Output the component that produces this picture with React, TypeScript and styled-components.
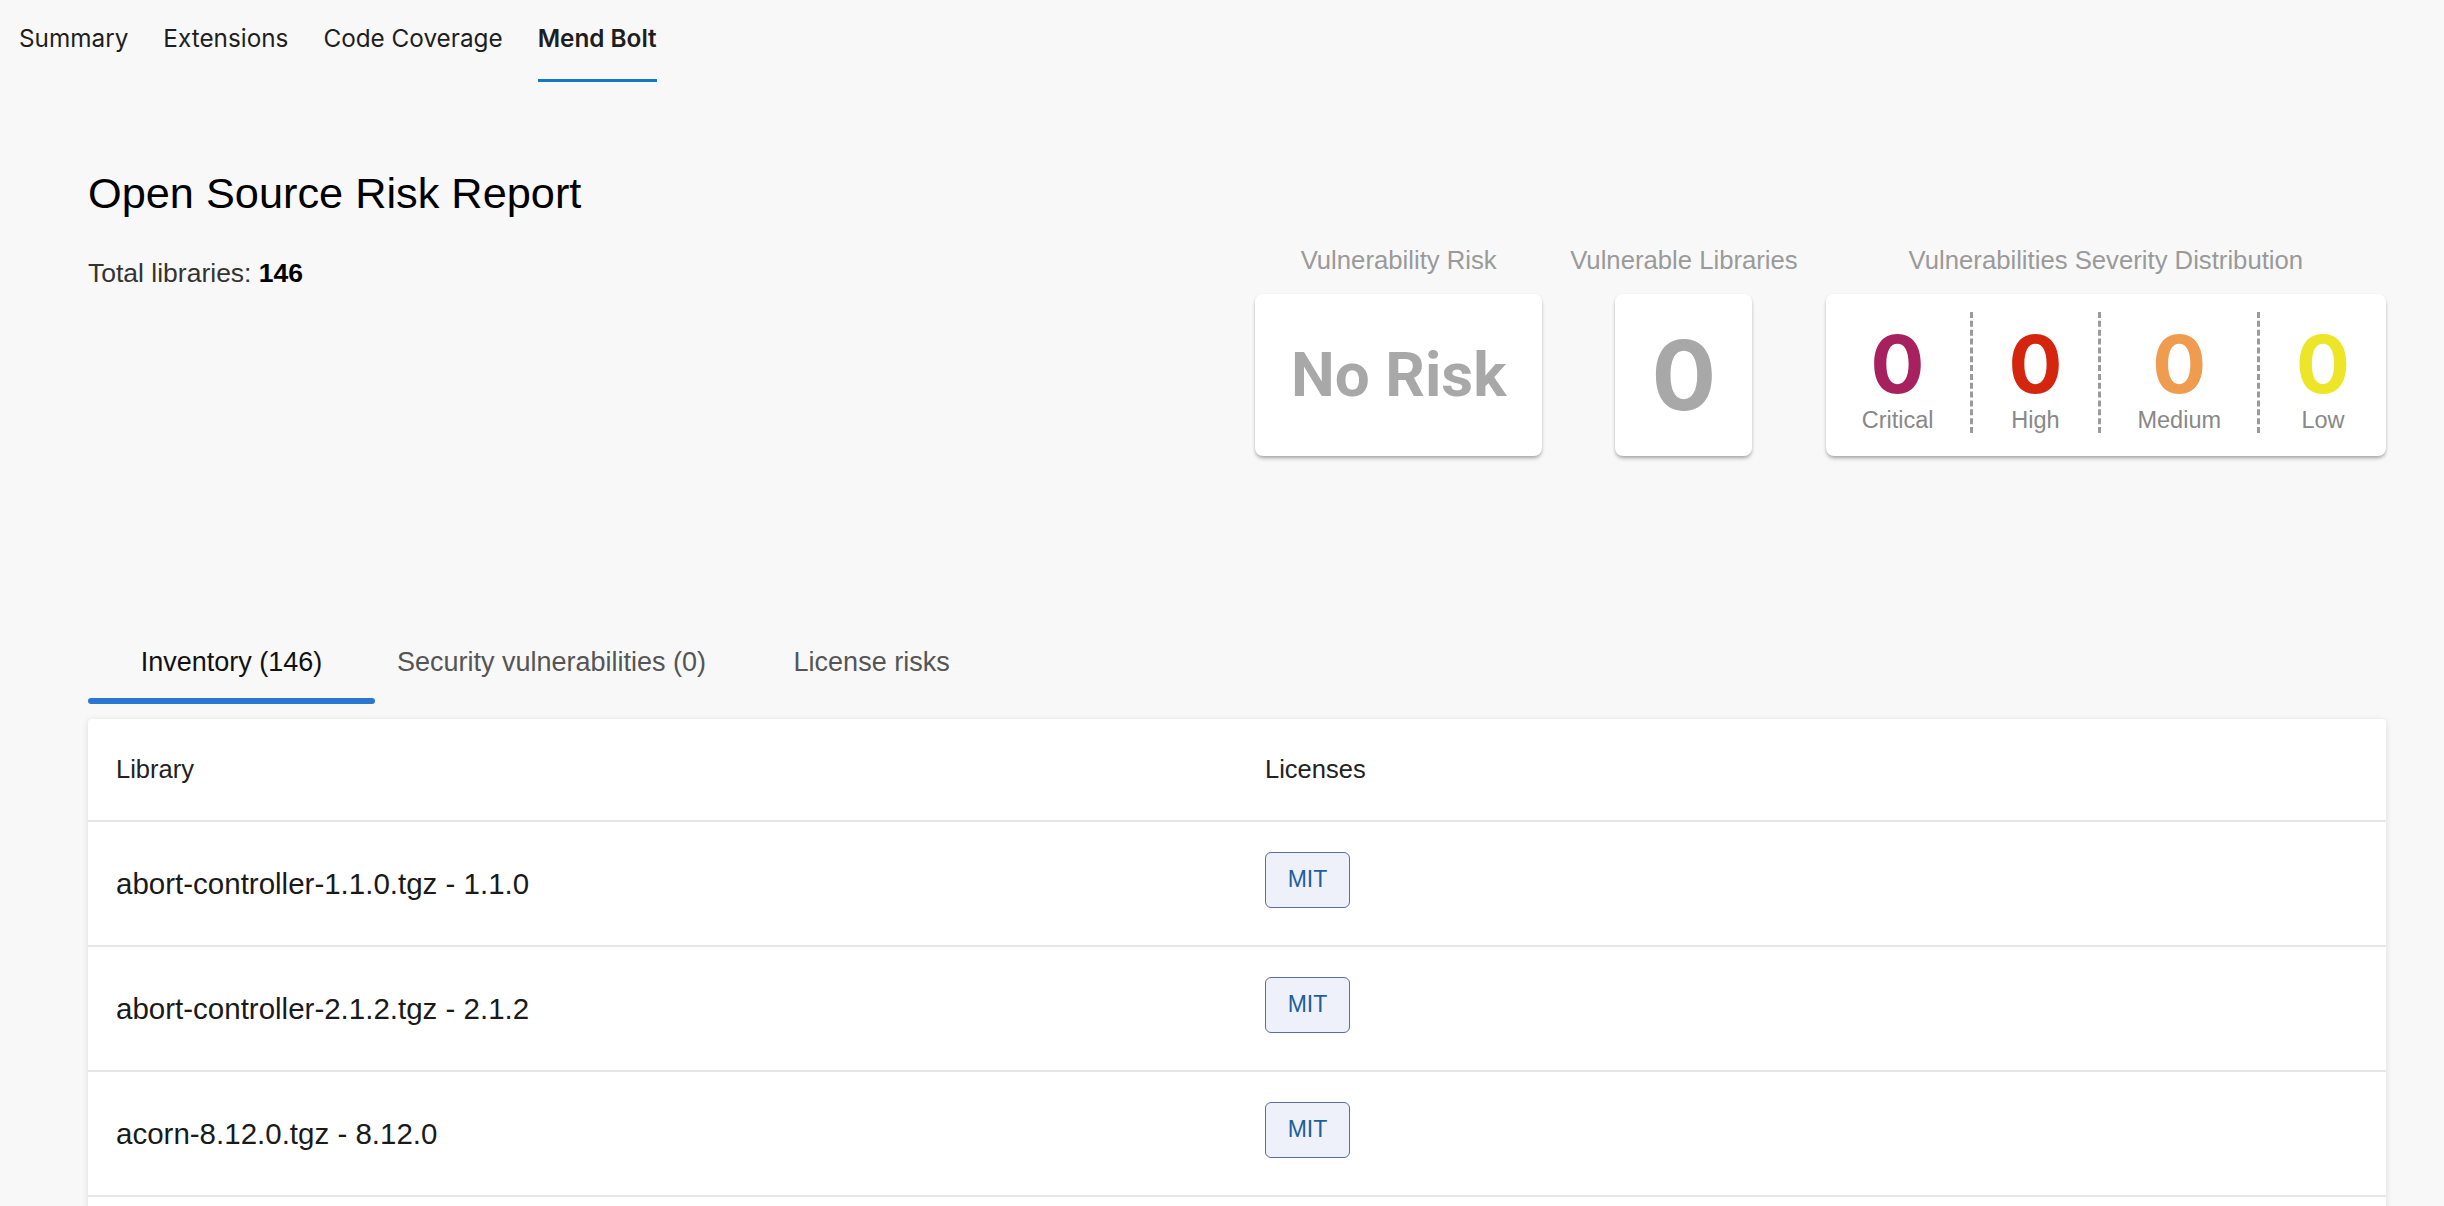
import React from 'react';
import styled, { createGlobalStyle } from 'styled-components';

const GlobalStyle = createGlobalStyle`
  html, body {
    margin: 0;
    padding: 0;
    background: #f8f8f8;
    overflow: hidden;
  }
  body {
    font-family: "Liberation Sans", Arial, sans-serif;
    color: #1a1a1a;
  }
`;

const navItems = ['Summary', 'Extensions', 'Code Coverage', 'Mend Bolt'];

const severities = [
  { label: 'Critical', color: '#a8215f' },
  { label: 'High', color: '#d4260f' },
  { label: 'Medium', color: '#f09c50' },
  { label: 'Low', color: '#ece528' },
];

const libraries = [
  'abort-controller-1.1.0.tgz - 1.1.0',
  'abort-controller-2.1.2.tgz - 2.1.2',
  'acorn-8.12.0.tgz - 8.12.0',
  'acorn-jsx-5.3.2.tgz - 5.3.2',
];

const TopNav = styled.nav`
  display: flex;
  gap: 35px;
  padding-left: 19px;
`;

const NavTab = styled.div<{ $active?: boolean }>`
  box-sizing: border-box;
  height: 82px;
  padding-top: 24px;
  font-family: Inter, "Noto Sans", sans-serif;
  font-size: 24.3px;
  line-height: 29px;
  color: #1e1e1e;
  font-weight: ${(p) => (p.$active ? 600 : 400)};
  border-bottom: 3px solid ${(p) => (p.$active ? '#1479c4' : 'transparent')};
`;

const Content = styled.main`
  padding: 0 58px 0 88px;
`;

const Header = styled.section`
  display: flex;
  justify-content: space-between;
  align-items: flex-start;
  padding-top: 90px;
`;

const TitleBlock = styled.div`
  display: flex;
  flex-direction: column;
`;

const Title = styled.h1`
  margin: 0;
  font-size: 43.3px;
  line-height: 42px;
  font-weight: 400;
  color: #000;
`;

const Total = styled.div`
  margin-top: 47px;
  font-size: 26.5px;
  line-height: 25px;
  color: #333;

  b {
    color: #000;
  }
`;

const Metrics = styled.div`
  display: flex;
  gap: 28px;
  margin-top: 76px;
`;

const MetricGroup = styled.div`
  display: flex;
  flex-direction: column;
  align-items: center;
`;

const MetricLabel = styled.div`
  font-size: 25.7px;
  line-height: 24px;
  color: #9a9a9a;
  white-space: nowrap;
`;

const Card = styled.div<{ $width?: number }>`
  box-sizing: border-box;
  margin-top: 22px;
  height: 162px;
  ${(p) => (p.$width ? `width: ${p.$width}px;` : '')}
  background: #fff;
  border-radius: 8px;
  box-shadow: 0 3px 4px -1px rgba(0, 0, 0, 0.32), 0 1px 3px rgba(0, 0, 0, 0.08);
  display: flex;
  align-items: center;
  justify-content: center;
`;

const RiskValue = styled.div`
  font-family: Roboto, "Liberation Sans", sans-serif;
  font-weight: 700;
  font-size: 62px;
  line-height: 1;
  color: #a8a8a8;
  white-space: nowrap;
`;

const CountValue = styled.div`
  font-family: Inter, Roboto, sans-serif;
  font-weight: 700;
  font-size: 96px;
  line-height: 1;
  color: #a8a8a8;
`;

const SeverityCard = styled(Card)`
  align-items: stretch;
  padding: 18px 0 23px;
`;

const SeverityCell = styled.div<{ $divider?: boolean }>`
  display: flex;
  flex-direction: column;
  align-items: center;
  padding: 12px 36px 0;
  border-left: 3px dashed ${(p) => (p.$divider ? '#9a9a9a' : 'transparent')};
  margin-left: ${(p) => (p.$divider ? 0 : -3)}px;
`;

const SeverityCount = styled.div<{ $color: string }>`
  font-family: Inter, Roboto, sans-serif;
  font-weight: 700;
  font-size: 80px;
  line-height: 80px;
  color: ${(p) => p.$color};
`;

const SeverityLabel = styled.div`
  margin-top: 5px;
  font-size: 23.5px;
  line-height: 22px;
  color: #888;
`;

const TabBar = styled.div`
  display: flex;
  margin-top: 188px;
`;

const Tab = styled.div<{ $active?: boolean }>`
  position: relative;
  box-sizing: border-box;
  min-width: 287px;
  height: 60px;
  padding: 6px 22px 0;
  text-align: center;
  font-size: 27px;
  line-height: 24px;
  color: ${(p) => (p.$active ? '#111' : '#555')};
  white-space: nowrap;

  &::after {
    content: '';
    display: ${(p) => (p.$active ? 'block' : 'none')};
    position: absolute;
    left: 0;
    right: 0;
    bottom: 0;
    height: 6px;
    border-radius: 3px;
    background: #2977d0;
  }
`;

const Table = styled.div`
  margin-top: 15px;
  background: #fff;
  border-radius: 4px 4px 0 0;
  box-shadow: 0 1px 6px rgba(0, 0, 0, 0.12);
`;

const Row = styled.div<{ $head?: boolean }>`
  box-sizing: border-box;
  display: grid;
  grid-template-columns: 1fr 1fr;
  align-items: center;
  height: ${(p) => (p.$head ? 103 : 125)}px;
  border-bottom: 2px solid #e6e6e6;
`;

const HeadCell = styled.div`
  padding: 0 28px;
  font-size: 25.5px;
  color: #222;
`;

const Cell = styled.div`
  padding: 0 28px;
  font-size: 29.5px;
  color: #1a1a1a;
`;

const LicenseBadge = styled.span`
  box-sizing: border-box;
  display: inline-flex;
  align-items: center;
  justify-content: center;
  width: 85px;
  height: 56px;
  margin-top: -8px;
  border: 1.5px solid #5b6ba3;
  border-radius: 6px;
  background: #eef0fa;
  color: #1d5f9e;
  font-size: 23px;
`;

export default function App() {
  return (
    <>
      <GlobalStyle />
      <TopNav>
        {navItems.map((n) => (
          <NavTab key={n} $active={n === 'Mend Bolt'}>
            {n}
          </NavTab>
        ))}
      </TopNav>
      <Content>
        <Header>
          <TitleBlock>
            <Title>Open Source Risk Report</Title>
            <Total>
              Total libraries: <b>146</b>
            </Total>
          </TitleBlock>
          <Metrics>
            <MetricGroup>
              <MetricLabel>Vulnerability Risk</MetricLabel>
              <Card $width={287}>
                <RiskValue>No Risk</RiskValue>
              </Card>
            </MetricGroup>
            <MetricGroup>
              <MetricLabel>Vulnerable Libraries</MetricLabel>
              <Card $width={137}>
                <CountValue>0</CountValue>
              </Card>
            </MetricGroup>
            <MetricGroup>
              <MetricLabel>Vulnerabilities Severity Distribution</MetricLabel>
              <SeverityCard>
                {severities.map((s, i) => (
                  <SeverityCell key={s.label} $divider={i > 0}>
                    <SeverityCount $color={s.color}>0</SeverityCount>
                    <SeverityLabel>{s.label}</SeverityLabel>
                  </SeverityCell>
                ))}
              </SeverityCard>
            </MetricGroup>
          </Metrics>
        </Header>

        <TabBar>
          <Tab $active>Inventory (146)</Tab>
          <Tab>Security vulnerabilities (0)</Tab>
          <Tab>License risks</Tab>
        </TabBar>

        <Table>
          <Row $head>
            <HeadCell>Library</HeadCell>
            <HeadCell>Licenses</HeadCell>
          </Row>
          {libraries.map((lib) => (
            <Row key={lib}>
              <Cell>{lib}</Cell>
              <Cell>
                <LicenseBadge>MIT</LicenseBadge>
              </Cell>
            </Row>
          ))}
        </Table>
      </Content>
    </>
  );
}
